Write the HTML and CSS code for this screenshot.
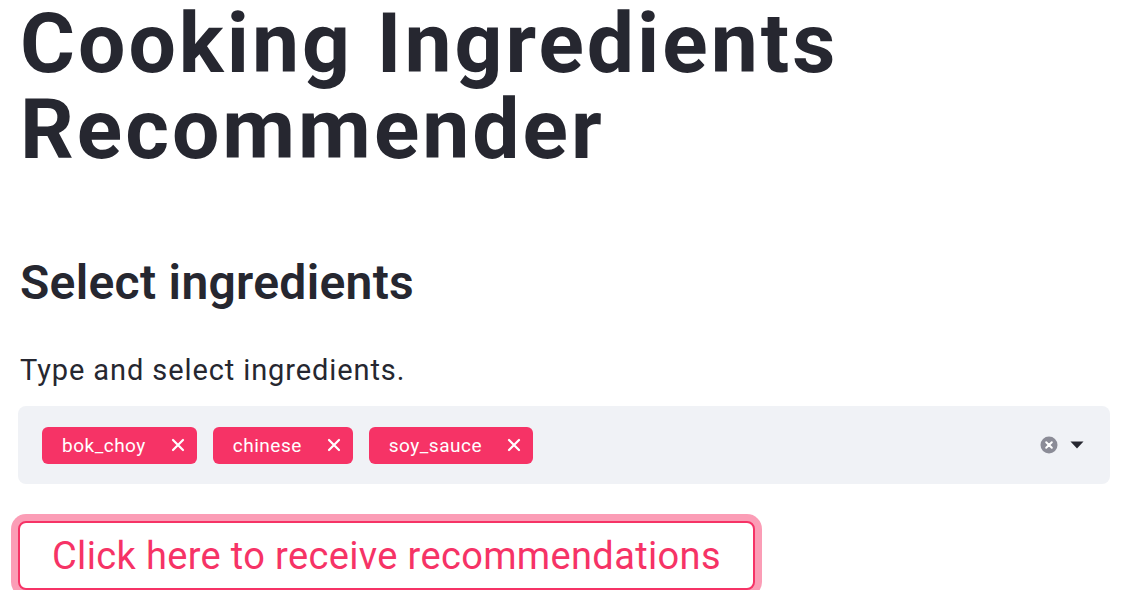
FILE: index.html
```html
<!DOCTYPE html>
<html>
<head>
<meta charset="utf-8">
<link rel="stylesheet" href="styles.css">
</head>
<body>
<main class="page">
  <h1 class="title">Cooking Ingredients Recommender</h1>
  <h2 class="subtitle">Select ingredients</h2>
  <div class="label">Type and select ingredients.</div>
  <div class="select">
    <div class="tags">
      <span class="tag"><span class="tag-text">bok_choy</span><svg class="tag-x" viewBox="0 0 14 14"><path d="M2 2 L12 12 M12 2 L2 12" stroke="#fff" stroke-width="2.2" stroke-linecap="round"/></svg></span>
      <span class="tag"><span class="tag-text">chinese</span><svg class="tag-x" viewBox="0 0 14 14"><path d="M2 2 L12 12 M12 2 L2 12" stroke="#fff" stroke-width="2.2" stroke-linecap="round"/></svg></span>
      <span class="tag"><span class="tag-text">soy_sauce</span><svg class="tag-x" viewBox="0 0 14 14"><path d="M2 2 L12 12 M12 2 L2 12" stroke="#fff" stroke-width="2.2" stroke-linecap="round"/></svg></span>
    </div>
    <div class="controls">
      <svg class="clear" viewBox="0 0 18 18"><circle cx="9" cy="9" r="8.5" fill="#8b8c97"/><path d="M6.2 6.2 L11.8 11.8 M11.8 6.2 L6.2 11.8" stroke="#fff" stroke-width="2" stroke-linecap="round"/></svg>
      <svg class="caret" viewBox="0 0 14 8"><path d="M0.5 0.5 L13.5 0.5 L7 7.5 Z" fill="#262730"/></svg>
    </div>
  </div>
  <div class="btn-row">
    <button class="btn">Click here to receive recommendations</button>
  </div>
</main>
</body>
</html>
```

FILE: styles.css
```css
* { box-sizing: border-box; }
html, body { margin: 0; padding: 0; background: #fff; }
body {
  font-family: Roboto, "Noto Sans", sans-serif;
  color: #262730;
}
.page {
  padding: 0 19px 0 18px;
  width: 1129px;
}
.title {
  margin: 0;
  padding: 1px 0 0 2px;
  font-size: 84px;
  font-weight: 700;
  line-height: 86px;
  letter-spacing: 3px;
  width: 900px;
}
.subtitle {
  margin: 80px 0 0 0;
  padding-left: 2px;
  font-size: 48px;
  font-weight: 600;
  line-height: 60px;
  letter-spacing: 0.3px;
}
.label {
  margin-top: 37px;
  padding-left: 2px;
  font-size: 29px;
  line-height: 40px;
  letter-spacing: 0.9px;
}
.select {
  margin-top: 16px;
  height: 78px;
  background: #f0f2f6;
  border-radius: 8px;
  display: flex;
  align-items: center;
  justify-content: space-between;
  padding: 0 26px 0 24px;
}
.tags {
  display: flex;
  gap: 16px;
}
.tag {
  height: 37px;
  background: #f63366;
  border-radius: 6px;
  display: flex;
  align-items: center;
  color: #fff;
  font-size: 19px;
  letter-spacing: 0.5px;
  padding: 0 12px 0 20px;
}
.tag-text { margin-right: 25px; }
.tag-x { width: 14px; height: 14px; }
.controls {
  display: flex;
  align-items: center;
  gap: 12px;
}
.clear { width: 18px; height: 18px; }
.caret { width: 14px; height: 8px; }
.btn-row {
  margin-top: 37px;
}
.btn {
  height: 69px;
  padding: 0 32px;
  background: #fff;
  border: 2px solid #f63366;
  border-radius: 8px;
  box-shadow: 0 0 0 7px rgba(246, 51, 102, 0.48);
  color: #f63366;
  font-family: Roboto, "Noto Sans", sans-serif;
  font-size: 38px;
  line-height: 44px;
  letter-spacing: 0.35px;
}
```
